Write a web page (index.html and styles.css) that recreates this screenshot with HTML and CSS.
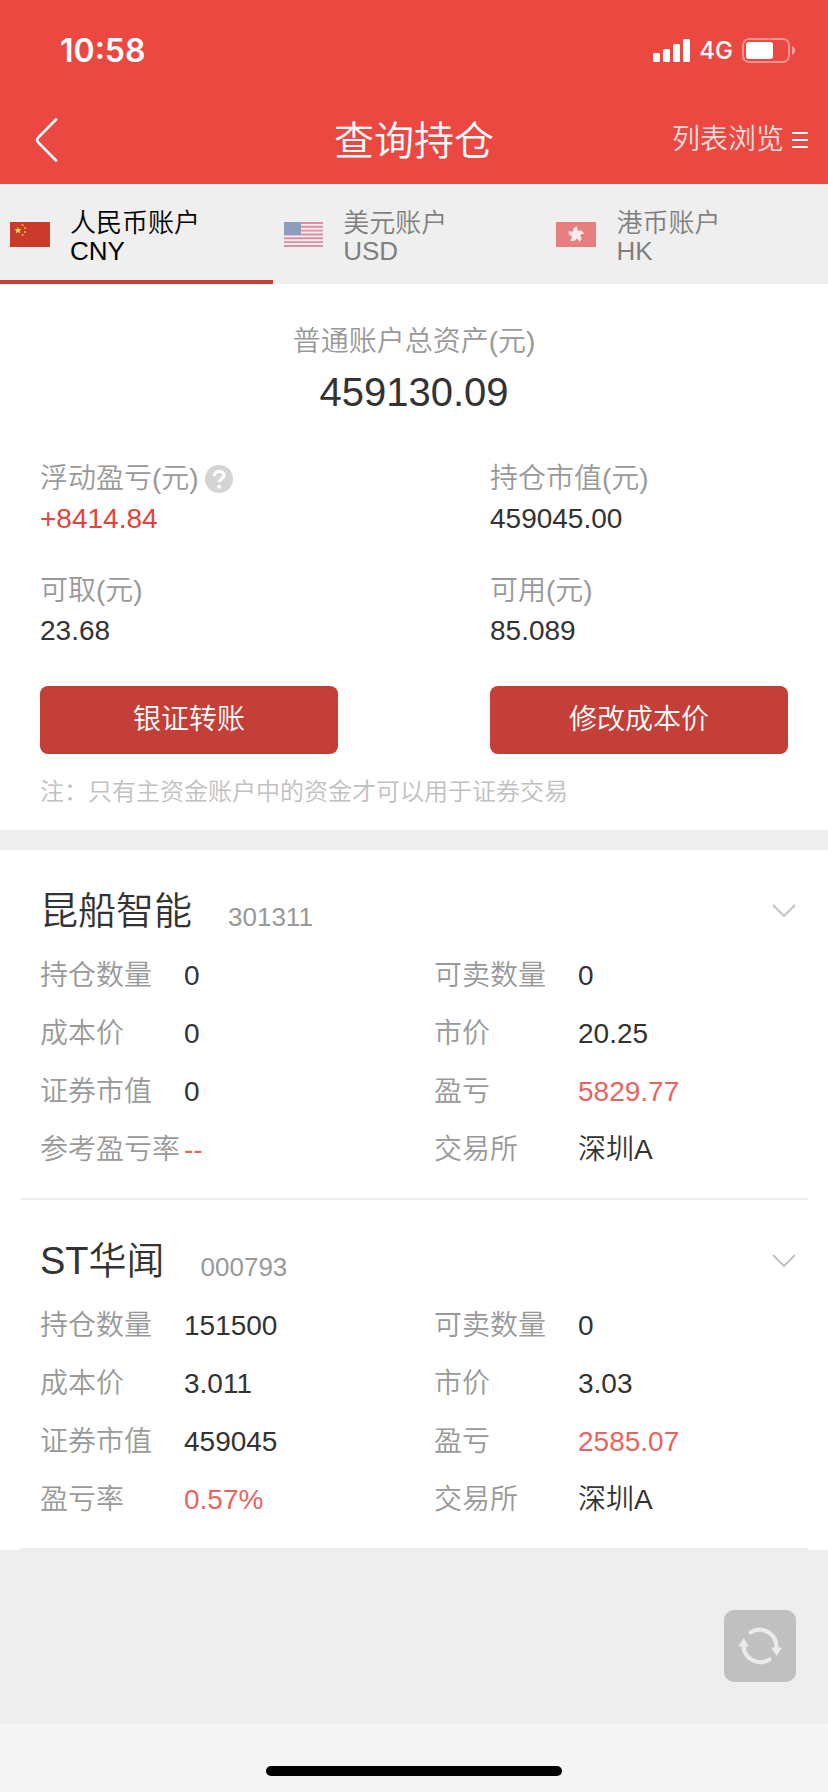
FILE: index.html
```html
<!DOCTYPE html>
<html lang="zh-CN">
<head>
<meta charset="utf-8">
<meta name="viewport" content="width=device-width, initial-scale=1">
<title>查询持仓</title>
<link rel="stylesheet" href="styles.css">
</head>
<body>
<div class="page">
  <header class="header">
    <div class="status">
      <span class="clock">10:58</span>
      <div class="status-icons">
        <svg width="37" height="24" viewBox="0 0 37 24" fill="#fff" aria-hidden="true">
          <rect x="0" y="14" width="7" height="9" rx="1.5"/><rect x="10" y="10" width="7" height="13" rx="1.5"/><rect x="20" y="5" width="7" height="18" rx="1.5"/><rect x="30" y="0" width="7" height="23" rx="1.5"/>
        </svg>
        <span class="network">4G</span>
        <svg width="54" height="26" viewBox="0 0 54 26" aria-hidden="true">
          <rect x="1" y="1" width="46" height="23" rx="6" fill="none" stroke="#fff" stroke-opacity=".4" stroke-width="2"/>
          <rect x="4" y="4" width="27" height="17" rx="3" fill="#fff"/>
          <path d="M50 8c4 1.500 4 7.500 0 9z" fill="#fff" fill-opacity=".5"/>
        </svg>
      </div>
    </div>
    <nav class="navbar">
      <button class="back" aria-label="返回">
        <svg width="24" height="46" viewBox="0 0 24 46" fill="none" stroke="#fff" stroke-width="2.600" stroke-linecap="round" stroke-linejoin="round"><path d="M21 2.500 3.200 20.600Q1 23 3.200 25.400L21 43.500"/></svg>
      </button>
      <h1 class="title">查询持仓</h1>
      <button class="browse">列表浏览
        <svg width="16" height="18" viewBox="0 0 16 18" fill="none" stroke="#fff" stroke-width="2" aria-hidden="true"><path d="M0 2h16M0 9h16M0 16h16"/></svg>
      </button>
    </nav>
  </header>

  <div class="tabs" role="tablist">
    <button class="tab active" role="tab" aria-selected="true">
      <svg class="flag" width="40" height="25" viewBox="0 0 40 25" aria-hidden="true">
        <rect width="40" height="25" fill="#c93a2b"/>
        <path d="M8 4.800 8.900 7.200 11.400 7.300 9.500 8.900 10.200 11.300 8 9.900 5.800 11.300 6.500 8.900 4.600 7.300 7.100 7.200z" fill="#fbe84a"/>
        <g fill="#e9b43b"><circle cx="12.500" cy="3" r="1.100"/><circle cx="15" cy="6" r="1.100"/><circle cx="15" cy="10" r="1.100"/><circle cx="12.500" cy="13" r="1.100"/></g>
      </svg>
      <span class="tab-text">人民币账户<br>CNY</span>
    </button>
    <button class="tab" role="tab" aria-selected="false">
      <svg class="flag" width="40" height="25" viewBox="0 0 40 25" aria-hidden="true">
        <rect x="1" width="39" height="25" fill="#f5eef1"/>
        <path d="M1 1h39M1 4.800h39M1 8.600h39M1 12.500h39M1 16.300h39M1 20.100h39M1 24h39" stroke="#de8ea2" stroke-width="1.900"/>
        <rect x="1" width="17" height="13" fill="#8c9cbd"/>
        <path d="M2.500 2h14M2.500 5h14M2.500 8h14M2.500 11h14" stroke="#95a4c3" stroke-dasharray="1 1.500"/>
      </svg>
      <span class="tab-text">美元账户<br>USD</span>
    </button>
    <button class="tab" role="tab" aria-selected="false">
      <svg class="flag" width="40" height="25" viewBox="0 0 40 25" aria-hidden="true">
        <rect width="40" height="25" fill="#e77f80"/>
        <g fill="#fbecec">
          <path id="petal" d="M20 12.600C15.500 10 16.500 5 21.500 4.600 20.200 6.500 24 9 20 12.600z"/>
          <use href="#petal" transform="rotate(72 20 12.600)"/><use href="#petal" transform="rotate(144 20 12.600)"/><use href="#petal" transform="rotate(216 20 12.600)"/><use href="#petal" transform="rotate(288 20 12.600)"/>
        </g>
      </svg>
      <span class="tab-text">港币账户<br>HK</span>
    </button>
  </div>

  <main class="content">
    <section class="summary">
      <p class="total-label">普通账户总资产(元)</p>
      <p class="total">459130.09</p>
      <dl class="figures">
        <div><dt>浮动盈亏(元)
          <svg class="help" width="28" height="28" viewBox="0 0 28 28" aria-hidden="true"><circle cx="14" cy="14" r="14" fill="#d4d4d4"/><path d="M9.300 11c0-6 9.700-6 9.700-.600 0 3.300-4.700 3.400-4.700 6.800" fill="none" stroke="#fff" stroke-width="3.200"/><circle cx="14.200" cy="21.800" r="2" fill="#fff"/></svg>
        </dt><dd class="gain">+8414.84</dd></div>
        <div><dt>持仓市值(元)</dt><dd>459045.00</dd></div>
        <div><dt>可取(元)</dt><dd>23.68</dd></div>
        <div><dt>可用(元)</dt><dd>85.089</dd></div>
      </dl>
      <div class="actions">
        <button class="action">银证转账</button>
        <button class="action">修改成本价</button>
      </div>
      <p class="note">注：只有主资金账户中的资金才可以用于证券交易</p>
    </section>

    <section class="holdings">
      <article class="stock">
        <div class="stock-head">
          <h2 class="name">昆船智能</h2><span class="code">301311</span>
          <button class="expand" aria-label="展开"><svg width="24" height="14" viewBox="0 0 24 14" fill="none" stroke="#c4c4c4" stroke-width="2"><path d="M1 1l11 11L23 1"/></svg></button>
        </div>
        <dl class="details">
          <dt>持仓数量</dt><dd>0</dd><dt>可卖数量</dt><dd>0</dd>
          <dt>成本价</dt><dd>0</dd><dt>市价</dt><dd>20.25</dd>
          <dt>证券市值</dt><dd>0</dd><dt>盈亏</dt><dd class="up">5829.77</dd>
          <dt>参考盈亏率</dt><dd class="up">--</dd><dt>交易所</dt><dd>深圳A</dd>
        </dl>
      </article>
      <article class="stock">
        <div class="stock-head">
          <h2 class="name">ST华闻</h2><span class="code">000793</span>
          <button class="expand" aria-label="展开"><svg width="24" height="14" viewBox="0 0 24 14" fill="none" stroke="#c4c4c4" stroke-width="2"><path d="M1 1l11 11L23 1"/></svg></button>
        </div>
        <dl class="details">
          <dt>持仓数量</dt><dd>151500</dd><dt>可卖数量</dt><dd>0</dd>
          <dt>成本价</dt><dd>3.011</dd><dt>市价</dt><dd>3.03</dd>
          <dt>证券市值</dt><dd>459045</dd><dt>盈亏</dt><dd class="up">2585.07</dd>
          <dt>盈亏率</dt><dd class="up">0.57%</dd><dt>交易所</dt><dd>深圳A</dd>
        </dl>
      </article>
    </section>
  </main>

  <footer class="home-bar"><span class="home-indicator"></span></footer>

  <button class="refresh" aria-label="刷新">
    <svg width="44" height="40" viewBox="0 0 44 40" fill="none" stroke="#eaeaea" stroke-width="4.200" stroke-linecap="round">
      <path d="M12.500 6.500A17 17 0 0 1 38.500 20.500V22"/><path d="M31.500 33.500A17 17 0 0 1 5.500 19.500V18"/>
      <path d="M33 21.500h11L38.500 30zM0 20.500h11L5.500 12z" fill="#eaeaea" stroke="none"/>
    </svg>
  </button>
</div>
</body>
</html>
```
FILE: styles.css
```css
* { box-sizing: border-box; margin: 0; padding: 0; }

body {
  font-family: "Liberation Sans", "Noto Sans CJK SC", sans-serif;
  font-size: 28px;
  line-height: 40px;
  font-weight: 350;
  color: #333;
  background: #eee;
}

button { font: inherit; color: inherit; background: none; border: 0; cursor: pointer; }
svg { display: block; flex: none; }

.page { position: relative; min-height: 100vh; display: flex; flex-direction: column; }

.header { background: #eb4841; color: #fff; }
.status {
  display: flex; align-items: center; justify-content: space-between;
  height: 96px; padding: 5px 32px 0 60px;
  font-family: Inter, sans-serif;
}
.clock { font-size: 32px; font-weight: 600; }
.status-icons { display: flex; align-items: center; gap: 9px; }
.network { font-size: 24px; font-weight: 500; }

.navbar {
  display: grid; grid-template-columns: 1fr auto 1fr; align-items: center;
  height: 88px; padding: 0 20px;
}
.back { justify-self: start; padding-left: 15px; }
.title { padding-top: 2px; font-size: 40px; font-weight: 350; line-height: 56px; }
.browse { justify-self: end; display: flex; align-items: center; gap: 8px; color: #fbdcda; }

.tabs { display: grid; grid-template-columns: 33% 33% 1fr; background: #efefef; }
.tab {
  display: flex; align-items: center; gap: 20px;
  padding: 4px 10px 0; height: 100px;
  border-bottom: 4px solid transparent;
  font-size: 26px; line-height: 28px; text-align: left; color: #7f7f7f;
}
.tab-text { padding-top: 6px; }
.tab.active { color: #000; border-color: #c33f37; }

.content { flex: 1; }
.summary { padding: 38px 40px 18px; background: #fff; }
.total-label { text-align: center; color: #999; }
.total { padding: 2px 0 4px; font-size: 40px; line-height: 56px; text-align: center; }

.figures, .actions { display: grid; grid-template-columns: 1fr 1fr; column-gap: 152px; }
.figures { row-gap: 32px; margin-top: 35px; }
.figures dt { display: flex; align-items: center; gap: 6px; color: #999; }
.figures .gain { color: #e34339; }

.actions { margin-top: 35px; }
.action { height: 68px; border-radius: 8px; background: #c33f37; color: #fff; }
.note { margin-top: 18px; font-size: 24px; color: #c0c0c0; }

.holdings { margin-top: 20px; background: #fff; }
.stock { margin: 0 20px; padding: 29px 12px 19px 20px; border-bottom: 2px solid #eee; }
.stock-head { display: flex; align-items: center; height: 64px; margin-bottom: 4px; }
.name { font-size: 38px; font-weight: 350; line-height: 56px; }
.code { margin-left: 36px; padding-top: 12px; font-size: 26px; color: #999; }
.expand { margin-left: auto; }

.details { display: grid; grid-template-columns: 144px 250px 144px 1fr; line-height: 58px; }
.details dt { color: #999; white-space: nowrap; }
.details .up { color: #e96460; }

.home-bar { display: flex; justify-content: center; align-items: flex-end; height: 68px; padding-bottom: 16px; background: #f5f5f5; }
.home-indicator { width: 296px; height: 10px; border-radius: 5px; background: #000; }

.refresh {
  position: absolute; right: 32px; bottom: 110px;
  display: flex; align-items: center; justify-content: center;
  width: 72px; height: 72px; border-radius: 10px; background: #c0c0c0;
}
```
